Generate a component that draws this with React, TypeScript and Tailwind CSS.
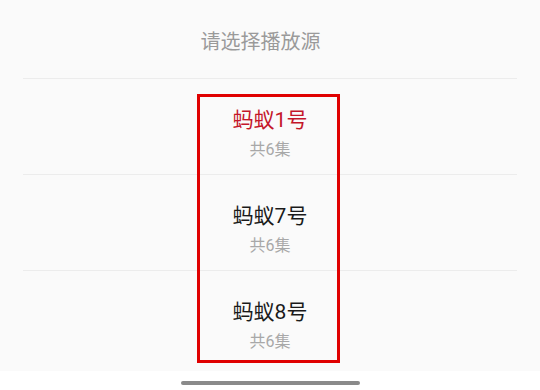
import React from 'react';

interface Source {
  name: string;
  episodes: number;
}

const sources: Source[] = [
  { name: '蚂蚁1号', episodes: 6 },
  { name: '蚂蚁7号', episodes: 6 },
  { name: '蚂蚁8号', episodes: 6 },
];

const App: React.FC = () => {
  const selected = 0;

  return (
    <div
      className="w-[540px] h-[390px] bg-white overflow-hidden"
      style={{ fontFamily: 'Roboto, "Noto Sans CJK SC", sans-serif' }}
    >
      <div className="relative h-[371px] bg-[#fafafa]">
        <div className="h-[78px] flex items-center justify-center pt-[6px] pr-[19px]">
          <span className="text-[20px] leading-[28px] text-[#9a9a9a]">请选择播放源</span>
        </div>
        {sources.map((s, i) => (
          <div key={s.name}>
            <div className="mx-[23px] h-px bg-[#ececec]" />
            <div className="h-[95px] flex flex-col items-center pt-[27px]">
              <span className={`text-[21px] leading-[28px] ${i === selected ? 'text-[#c4162a]' : 'text-[#1a1a1a]'}`}>
                {s.name}
              </span>
              <span className="mt-[5px] text-[16px] leading-[22px] text-[#a8a8a8]">共{s.episodes}集</span>
            </div>
          </div>
        ))}
        {/* highlight box */}
        <div className="absolute left-[197px] top-[94px] w-[143px] h-[269px] border-[3px] border-[#e00000] pointer-events-none" />
      </div>
      <div className="h-[19px] flex items-start justify-center pt-[10px]">
        <div className="w-[179px] h-[4px] rounded-full bg-[#8a8a8a]" />
      </div>
    </div>
  );
};

export default App;
